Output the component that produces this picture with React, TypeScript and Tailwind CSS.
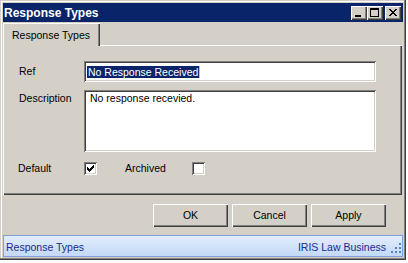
const raised =
	"shadow-[inset_1px_1px_#ffffff,inset_-1px_-1px_#404040,inset_-2px_-2px_#808080]";
const sunken =
	"shadow-[inset_1px_1px_#808080,inset_-1px_-1px_#ffffff,inset_2px_2px_#404040,inset_-2px_-2px_#d4d0c8]";

function CaptionButton({ kind }: { kind: "min" | "max" | "close" }) {
	return (
		<div className={`w-[16px] h-[14px] bg-[#d4d0c8] ${raised}`}>
			<svg width="16" height="14" viewBox="0 0 16 14" shapeRendering="crispEdges">
				{kind === "min" && <rect x="4" y="9" width="6" height="2" fill="#000" />}
				{kind === "max" && (
					<g fill="#000">
						<rect x="3" y="2" width="9" height="2" />
						<rect x="3" y="4" width="1" height="7" />
						<rect x="11" y="4" width="1" height="7" />
						<rect x="3" y="10" width="9" height="1" />
					</g>
				)}
				{kind === "close" && (
					<g fill="#000">
						<rect x="4" y="3" width="2" height="1" />
						<rect x="10" y="3" width="2" height="1" />
						<rect x="5" y="4" width="2" height="1" />
						<rect x="9" y="4" width="2" height="1" />
						<rect x="6" y="5" width="4" height="1" />
						<rect x="7" y="6" width="2" height="1" />
						<rect x="6" y="7" width="4" height="1" />
						<rect x="5" y="8" width="2" height="1" />
						<rect x="9" y="8" width="2" height="1" />
						<rect x="4" y="9" width="2" height="1" />
						<rect x="10" y="9" width="2" height="1" />
					</g>
				)}
			</svg>
		</div>
	);
}

function Checkbox({ checked }: { checked?: boolean }) {
	return (
		<div className={`w-[13px] h-[13px] bg-white shrink-0 ${sunken}`}>
			{checked && (
				<svg width="13" height="13" viewBox="0 0 13 13" shapeRendering="crispEdges">
					<g fill="#000">
						<rect x="9" y="3" width="1" height="1" />
						<rect x="8" y="4" width="2" height="1" />
						<rect x="3" y="5" width="1" height="1" />
						<rect x="7" y="5" width="3" height="1" />
						<rect x="3" y="6" width="2" height="1" />
						<rect x="6" y="6" width="3" height="1" />
						<rect x="3" y="7" width="5" height="1" />
						<rect x="4" y="8" width="3" height="1" />
						<rect x="5" y="9" width="1" height="1" />
					</g>
				</svg>
			)}
		</div>
	);
}

function Button({ label }: { label: string }) {
	return (
		<div className={`w-[75px] h-[23px] bg-[#d4d0c8] flex items-center justify-center ${raised}`}>
			{label}
		</div>
	);
}

export default function App() {
	return (
		<div className="w-[408px] h-[263px] bg-white font-['Liberation_Sans',Arial,sans-serif] text-[10.5px] text-black">
			<div className="w-[406px] h-[260px] bg-[#d4d0c8] p-[3px] flex flex-col shadow-[inset_-1px_-1px_#404040,inset_-2px_-2px_#808080,inset_1px_1px_#d4d0c8,inset_2px_2px_#ffffff]">
				{/* title bar */}
				<div className="h-[19px] bg-[#0a246a] flex items-start justify-between pl-[1px] pr-[2px]">
					<div className="text-white font-bold text-[12px] leading-[19px] pt-[1px]">Response Types</div>
					<div className="flex mt-[3px]">
						<CaptionButton kind="min" />
						<CaptionButton kind="max" />
						<div className="w-[2px]" />
						<CaptionButton kind="close" />
					</div>
				</div>

				{/* tabs */}
				<div className="w-[399px] mt-[1px] flex flex-col">
					<div className="flex h-[23px]">
						<div className="w-[97px] h-[23px] border-t border-l border-white rounded-tl-[1px] shadow-[inset_-1px_0_#404040,inset_-2px_0_#808080] flex items-center pl-[8px] pt-[1px]">
							Response Types
						</div>
						<div className="flex-1 border-b border-white" />
					</div>
					<div className="h-[149px] border-l border-white shadow-[inset_-1px_-1px_#404040,inset_-2px_-2px_#808080] pl-[15px] pt-[15px] flex flex-col">
						<div className="flex items-center h-[21px]">
							<div className="w-[65px]">Ref</div>
							<div className={`w-[292px] h-[21px] bg-white flex items-center pl-[3px] ${sunken}`}>
								<span className="bg-[#0a246a] text-white leading-[12px] px-[1px]">No Response Received</span>
								<span className="w-[1px] h-[12px] bg-[#e8c060]" />
							</div>
						</div>
						<div className="flex items-start mt-[8px]">
							<div className="w-[65px] pt-[2px] leading-[13px]">Description</div>
							<div className={`w-[292px] h-[62px] bg-white pl-[6px] pt-[2px] leading-[13px] ${sunken}`}>
								No response recevied.
							</div>
						</div>
						<div className="flex items-center mt-[10px] h-[13px]">
							<div className="w-[65px] -ml-[1px] mr-[1px]">Default</div>
							<Checkbox checked />
							<div className="w-[67px] ml-[28px]">Archived</div>
							<Checkbox />
						</div>
					</div>
				</div>

				{/* buttons */}
				<div className="flex justify-end gap-[4px] pr-[17px] mt-[9px]">
					<Button label="OK" />
					<Button label="Cancel" />
					<Button label="Apply" />
				</div>

				{/* status bar */}
				<div className="mt-[8px] h-[22px] border border-[#7ea2d8] bg-gradient-to-b from-[#e2edfc] to-[#c3d9f6] flex items-center justify-between pl-[2px] pr-[1px] pt-[3px] text-[#1c2a8c]">
					<span>Response Types</span>
					<div className="flex items-center gap-[5px]">
						<span>IRIS Law Business</span>
						<svg width="10" height="10" viewBox="0 0 10 10" shapeRendering="crispEdges" className="mt-[1px]">
							<g fill="#5f7fbf">
								<rect x="8" y="0" width="2" height="2" />
								<rect x="4" y="4" width="2" height="2" />
								<rect x="8" y="4" width="2" height="2" />
								<rect x="0" y="8" width="2" height="2" />
								<rect x="4" y="8" width="2" height="2" />
								<rect x="8" y="8" width="2" height="2" />
							</g>
						</svg>
					</div>
				</div>
			</div>
		</div>
	);
}
